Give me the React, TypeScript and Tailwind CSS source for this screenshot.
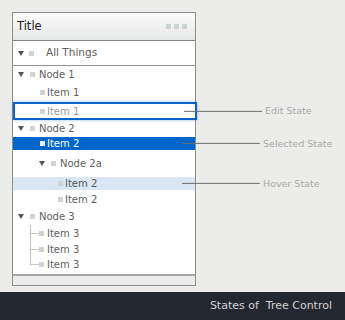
import React from "react";

type Node = {
  label: string;
  h: number;
  pad: number;
  arrow?: boolean;
  state?: "edit" | "selected" | "hover";
  line?: boolean;
};

const rows: Node[] = [
  { label: "Node 1", h: 17, pad: 5, arrow: true },
  { label: "Item 1", h: 19, pad: 27 },
  { label: "Item 1", h: 18, pad: 27, state: "edit" },
  { label: "Node 2", h: 17, pad: 5, arrow: true },
  { label: "Item 2", h: 13, pad: 27, state: "selected" },
  { label: "Node 2a", h: 27, pad: 26, arrow: true },
  { label: "Item 2", h: 13, pad: 45, state: "hover" },
  { label: "Item 2", h: 18, pad: 45 },
  { label: "Node 3", h: 17, pad: 5, arrow: true },
  { label: "Item 3", h: 16, pad: 17, line: true },
  { label: "Item 3", h: 16, pad: 17, line: true },
  { label: "Item 3", h: 15, pad: 17, line: true },
];

const callouts: Record<string, string> = {
  edit: "Edit State",
  selected: "Selected State",
  hover: "Hover State",
};

const Arrow = () => (
  <svg width="6" height="5" viewBox="0 0 6 5" className="shrink-0">
    <path d="M0 0 L6 0 L3 5 Z" fill="#555" />
  </svg>
);

const Square = ({ light }: { light?: boolean }) => (
  <span className={`w-[5px] h-[5px] shrink-0 ${light ? "bg-[#e8eef8]" : "bg-[#cfd3d3]"}`} />
);

const TreeRow = ({ row }: { row: Node }) => {
  const bg =
    row.state === "selected"
      ? "bg-[#0066cc] text-white"
      : row.state === "hover"
      ? "bg-[#dbe6f4] text-[#555]"
      : row.state === "edit"
      ? "border-2 border-[#0a64c8] mr-[-2px] shadow-[0_0_3px_rgba(0,80,180,0.4)] text-[#9a9a9a]"
      : "text-[#5e5e5e]";

  return (
    <div
      className={`relative flex items-center text-[10px] ${bg}`}
      style={{ height: row.h, paddingLeft: row.state === "edit" ? row.pad - 2 : row.pad }}
    >
      {row.arrow && <Arrow />}
      {row.arrow && <span className="w-[6px]" />}
      {row.line && <span className="w-[9px] h-px bg-[#c4c4c4]" />}
      <Square light={row.state === "selected"} />
      <span className={row.arrow ? "ml-[4px]" : row.line ? "ml-[3px]" : "ml-[2px]"}>{row.label}</span>

      {row.state && (
        <div className="absolute left-[169px] top-1/2 -translate-y-1/2 flex items-center">
          <span className="w-[78px] h-px bg-[#6b6f6f]" />
          <span className="ml-[3px] text-[9.5px] text-[#a9a9a9] whitespace-nowrap">
            {callouts[row.state]}
          </span>
        </div>
      )}
    </div>
  );
};

export default function App() {
  return (
    <div
      className="w-[345px] h-[320px] flex flex-col bg-[#ecedeb]"
      style={{ fontFamily: '"DejaVu Sans", sans-serif' }}
    >
      <div className="flex-1 pt-[12px] pl-[12px]">
        <div className="w-[184px] h-[274px] flex flex-col border border-[#8d8f8f] bg-white">
          {/* header */}
          <div className="h-[28px] flex items-center justify-between pl-[4px] pr-[8px] bg-gradient-to-b from-[#fbfbfb] to-[#e6e7e7] border-b border-[#858787]">
            <span className="text-[11.5px] text-[#222]">Title</span>
            <div className="flex gap-[3px] -mt-[1px]">
              <span className="w-[5px] h-[5px] bg-[#cad3d3]" />
              <span className="w-[5px] h-[5px] bg-[#cad3d3]" />
              <span className="w-[5px] h-[5px] bg-[#cad3d3]" />
            </div>
          </div>

          {/* root */}
          <div className="h-[25px] flex items-center pl-[5px] border-b border-[#909292] text-[10.5px] text-[#5e5e5e]">
            <Arrow />
            <span className="w-[5px]" />
            <Square />
            <span className="ml-[12px]">All Things</span>
          </div>

          <div className="relative flex-1 flex flex-col">
            {/* tree line under Node 3 */}
            <span className="absolute left-[17px] top-[159px] w-px h-[41px] bg-[#c4c4c4]" />
            {rows.map((r, i) => (
              <TreeRow key={i} row={r} />
            ))}
          </div>

          {/* bottom bar */}
          <div className="h-[11px] border-t-2 border-[#a5a7a7] bg-[#ececec]" />
        </div>
      </div>

      <div className="h-[28px] flex items-center justify-end pr-[13px] bg-[#23272f] text-[11px] text-[#d2d2d2] whitespace-pre">
        States of  Tree Control
      </div>
    </div>
  );
}
